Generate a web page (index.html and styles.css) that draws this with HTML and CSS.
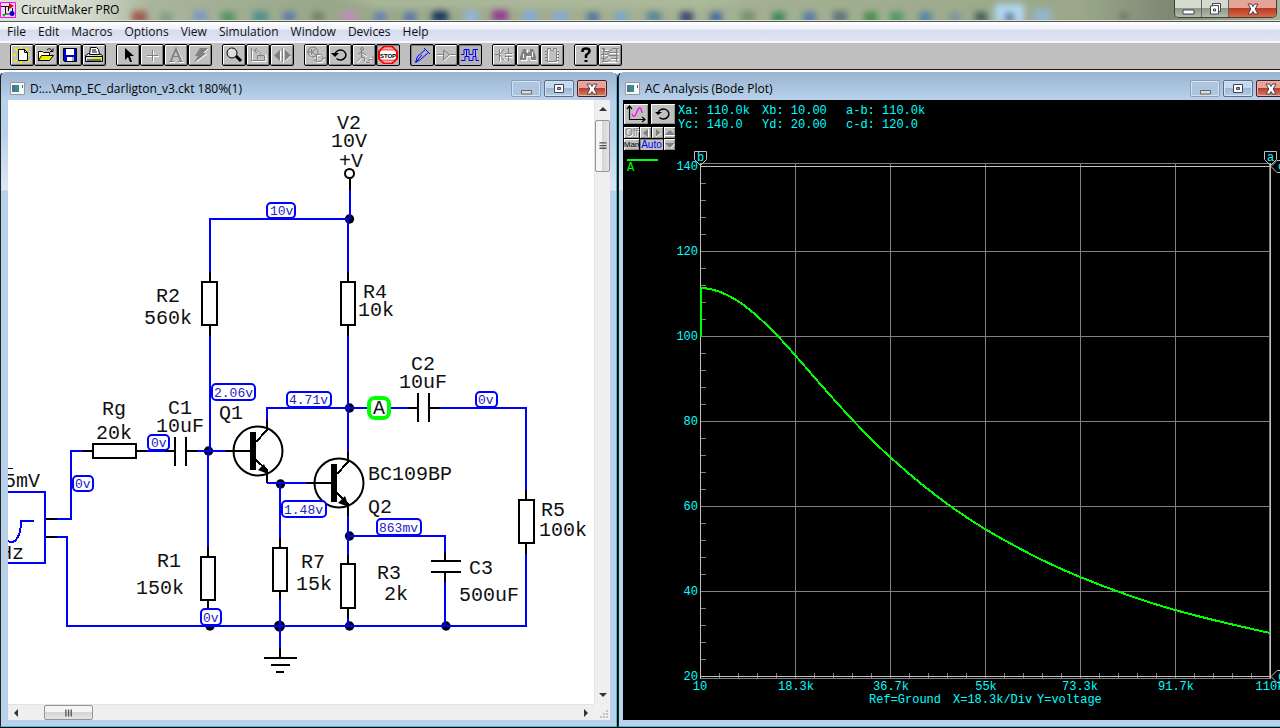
FILE: index.html
```html
<!DOCTYPE html>
<html lang="en">
<head>
<meta charset="utf-8">
<title>CircuitMaker PRO</title>
<link rel="stylesheet" href="styles.css">
</head>
<body>
<header class="titlebar">
  <svg class="glass" aria-hidden="true">
    <defs><filter id="soft" x="-50%" y="-50%" width="200%" height="200%"><feGaussianBlur stdDeviation="3"/></filter></defs>
    <g filter="url(#soft)">
      <path d="M330 -4H760L700 8H380Z" fill="#b2bfa0" opacity=".6"/>
      <rect x="132" y="11" width="15" height="12" fill="#a05a4c"/>
      <rect x="160" y="13" width="12" height="9" fill="#7d9f7c"/>
      <rect x="193" y="11" width="14" height="11" fill="#7c98bf"/>
      <rect x="221" y="12" width="14" height="11" fill="#539460"/>
      <rect x="253" y="11" width="15" height="12" fill="#4f928a"/>
      <rect x="283" y="12" width="12" height="10" fill="#5d78ab"/>
      <rect x="312" y="12" width="12" height="10" fill="#77806c"/>
      <rect x="342" y="11" width="15" height="12" fill="#bd8fb9"/>
      <rect x="374" y="12" width="12" height="11" fill="#6582b2"/>
      <rect x="404" y="12" width="12" height="11" fill="#5878ae"/>
      <rect x="432" y="10" width="16" height="13" fill="#1e3c64"/>
      <rect x="464" y="11" width="14" height="12" fill="#8fb6d8"/>
      <rect x="492" y="9" width="16" height="13" fill="#953f91"/>
      <rect x="523" y="11" width="14" height="12" fill="#82aad8"/>
      <rect x="554" y="12" width="13" height="11" fill="#81aade"/>
      <rect x="587" y="12" width="12" height="11" fill="#54749f"/>
      <rect x="615" y="12" width="12" height="11" fill="#7da6d0"/>
      <rect x="647" y="11" width="14" height="12" fill="#5b8797"/>
      <rect x="680" y="11" width="13" height="12" fill="#3c4e74"/>
      <rect x="710" y="12" width="12" height="11" fill="#476a9c"/>
      <rect x="741" y="11" width="14" height="12" fill="#78936f"/>
      <rect x="772" y="12" width="13" height="11" fill="#3b8a5c"/>
      <rect x="803" y="12" width="13" height="11" fill="#597ba6"/>
      <rect x="833" y="11" width="14" height="12" fill="#61767b"/>
      <rect x="864" y="12" width="13" height="11" fill="#458f4d"/>
      <rect x="890" y="12" width="13" height="11" fill="#4c9866"/>
      <rect x="919" y="12" width="13" height="11" fill="#5685a5"/>
      <rect x="949" y="12" width="12" height="11" fill="#799a9b"/>
      <rect x="975" y="12" width="12" height="11" fill="#42625f"/>
      <rect x="995" y="4" width="29" height="20" fill="#b2d7f2"/>
      <rect x="1005" y="13" width="9" height="9" fill="#47688b"/>
      <rect x="1033" y="9" width="18" height="14" fill="#93b6cf"/>
      <rect x="1120" y="13" width="8" height="7" fill="#69755f"/>
    </g>
  </svg>
  <svg class="app-icon" viewBox="0 0 16 16" aria-hidden="true"><path fill="#e8e0ee" stroke="#f0f" d="M.5.5h15v15H.5z"/><path d="M1 4.500h9M5.500 4v8h4M8.500 4v5M12.500 6v4" stroke="#111" fill="none"/><path d="M9 1l5 3-5 3z" fill="#e00"/><circle cx="12" cy="11.500" r="2.500" fill="#00c"/><path d="M2 12h4l-2 3z" fill="#0a0"/></svg>
  <h1 class="app-title">CircuitMaker PRO</h1>
  <div class="app-controls">
    <button class="cap" aria-label="Minimize"><svg viewBox="0 0 14 14"><path d="M2 8h11v4H2z" fill="#fff" stroke="#445"/></svg></button>
    <button class="cap cap-mid" aria-label="Restore"><svg viewBox="0 0 14 14"><path d="M4.500 1.500h8v8h-2v2.500h-8v-8h2z" fill="#fff" stroke="#445"/><path d="M5.500 7h2v2h-2zM4.500 3.500h6v6" fill="none" stroke="#445"/></svg></button>
    <button class="cap cap-close" aria-label="Close"><svg viewBox="0 0 14 14"><path d="M2 2h3.500L7 4.500 8.500 2H12L9.200 7 12 12H8.500L7 9.500 5.500 12H2l2.800-5z" fill="#fff" stroke="#534"/></svg></button>
  </div>
</header>

<nav class="menubar">
  <a href="#">File</a><a href="#">Edit</a><a href="#">Macros</a><a href="#">Options</a><a href="#">View</a><a href="#">Simulation</a><a href="#">Window</a><a href="#">Devices</a><a href="#">Help</a>
</nav>

<div class="toolbar" role="toolbar" aria-label="Tools">
  <div class="group">
    <button class="tool" aria-label="New"><svg viewBox="0 0 20 18"><path d="M3 2l3 3M16 2l-2 2M1 9h3M15 9h3M3 16l2-2M17 16l-2-2M9 0v3M9 15v3" stroke="#ee0" stroke-width="2"/><path d="M6.500 3.500h6l3 3v8h-9z" fill="#fff" stroke="#000"/><path d="M12.500 3.500v3h3" fill="none" stroke="#000"/></svg></button>
    <button class="tool" aria-label="Open"><svg viewBox="0 0 20 18"><path d="M2.500 14.500v-9h4l1 1h6v3" fill="#ffc" stroke="#000"/><path d="M2.500 14.500l3-5h12l-4 5z" fill="#ee0" stroke="#000"/><path d="M11 4q3-3 5 1M14 5.500h3v-3" fill="none" stroke="#000"/></svg></button>
    <button class="tool" aria-label="Save"><svg viewBox="0 0 20 18"><path d="M3.500 2.500h13v13h-12l-1-1z" fill="#00c" stroke="#000"/><path d="M6 3h8v6H6zM7 11h5v4H7z" fill="#fff"/><path d="M12 11h2v4h-2z" fill="#aaa"/></svg></button>
    <button class="tool" aria-label="Print"><svg viewBox="0 0 20 18"><path d="M1.500 9.500l3-2h11l3 2v6h-17z" fill="#ddd" stroke="#000"/><path d="M5.500 8.500l1-7h6l2 2 1 5z" fill="#fff" stroke="#000"/><path d="M8 4h4M8 6h5" stroke="#000"/><path d="M9 12.500h9" stroke="#ee0" stroke-width="2"/><path d="M2 10.500h16M3 14h14" stroke="#000"/></svg></button>
  </div>
  <div class="group">
    <button class="tool" aria-label="Arrow"><svg viewBox="0 0 20 18"><path d="M7 2v12l3-3 2 5h2l-2-6h4z" fill="#000"/></svg></button>
    <button class="tool" aria-label="Wire" disabled><svg viewBox="0 0 20 18"><path class="lit" d="M11.500 5v11M5 10.500h12"/><path class="dim" d="M10.500 4v11M5 9.500h11"/></svg></button>
    <button class="tool" aria-label="Text" disabled><svg viewBox="0 0 20 18"><path class="lit" d="M4 16.500h5M13 16.500h5M6 15l5-12 6 13"/><path class="dim" stroke-width="2" d="M5 15l5-12 5 12"/><path class="dim" d="M3 15.500h5M12 15.500h5M7 10.500h6"/></svg></button>
    <button class="tool" aria-label="Delete" disabled><svg viewBox="0 0 20 18"><path d="M10 2h8l-5 5h3L4 17l4-7H5z" fill="#808080"/><path class="lit" d="M18 3l-4 4M17 8L6 16"/></svg></button>
  </div>
  <div class="group">
    <button class="tool" aria-label="Zoom"><svg viewBox="0 0 20 18"><circle cx="8" cy="7" r="5" fill="#ddd" stroke="#000"/><path d="M5 5q1-2 3-2" stroke="#fff" fill="none"/><path d="M12 10l5 5" stroke="#000" stroke-width="3"/></svg></button>
    <button class="tool" aria-label="Rotate" disabled><svg viewBox="0 0 20 18"><path class="lit" d="M4 15.500h14v-6h-8M4.500 5v10M8 5.500q5 0 5 6"/><path class="dim" d="M3.500 2v12.500h13v-5h-7v4M7 4.500q6 0 6 7M9 2L6 4.500 9 7"/></svg></button>
    <button class="tool" aria-label="Mirror" disabled><svg viewBox="0 0 20 18"><path d="M8 4v11L2 9.500zM13 4v11l6-5.500z" fill="#808080"/><path class="lit" d="M11.500 2v15M8.500 5v10M13.500 15l5-5"/><path class="dim" d="M10.500 2v14"/></svg></button>
  </div>
  <div class="group">
    <button class="tool" aria-label="Digital analog" disabled><svg viewBox="0 0 20 18"><path class="lit" d="M11 9.500h5q4 4 0 7h-5zM8 12h3M5 5v7"/><circle class="dim" cx="7" cy="6" r="5"/><path class="dim" d="M1 6h4M5.500 3v6M6 6l4-3M6 6l4 3M10.500 8.500h4q5 3.500 0 7h-4zM8 14h3M17 12h3"/></svg></button>
    <button class="tool" aria-label="Reset"><svg viewBox="0 0 20 18"><path d="M5 8A5.500 5 0 1 1 6.500 12.500" fill="none" stroke="#000" stroke-width="1.500"/><path d="M1 7h8l-4 4z" fill="#000"/></svg></button>
    <button class="tool" aria-label="Step" disabled><svg viewBox="0 0 20 18"><path class="lit" d="M9 8l4 3M8 11l-4 6M11 13v4M14 15.500h2v-3h4"/><circle class="dim" cx="8" cy="3" r="1.500"/><path class="dim" d="M7.500 5v6l-4 4M7.500 11l3 1v4M4 8l3-2 5 3M12 16.500h3v-3h4v-3"/></svg></button>
    <button class="tool pressed" aria-label="Stop"><svg viewBox="0 0 20 18"><path d="M6 .5h8l5 5v7l-5 5H6l-5-5v-7z" fill="#fff" stroke="#f00" stroke-width="2"/><path d="M4 3.500h12M4 14.500h12" stroke="#f66" stroke-width="2"/><text class="stop" x="10" y="12" text-anchor="middle">STOP</text></svg></button>
  </div>
  <div class="group">
    <button class="tool pressed" aria-label="Probe"><svg viewBox="0 0 20 18"><path d="M3.500 16.500l2-6 8-7 3 3-8 7zM4 16l6-7M12 2l6 6" fill="none" stroke="#00f"/></svg></button>
    <button class="tool" aria-label="Gate" disabled><svg viewBox="0 0 20 18"><path class="lit" d="M1 9.500h6M8 15l6-5.500h6"/><path class="dim" d="M1 8.500h6M7.500 4v10l6-5.500zM14 8.500h6"/></svg></button>
    <button class="tool pressed" aria-label="Waveforms"><svg viewBox="0 0 20 18"><path d="M1 8.500h3v-5h5v5h4v-5h5M1 14.500h4v-4h4v4h4v-4h3v4h3" fill="none" stroke="#00f"/><path d="M6.500 4v6M15.500 4v6" stroke="#00f"/></svg></button>
  </div>
  <div class="group">
    <button class="tool" aria-label="Parts" disabled><svg viewBox="0 0 20 18"><path class="lit" d="M6.500 3v13M8 10l4 5M12 8.500h7M12 11.500h7"/><path class="dim" d="M1 8.500h4M5.500 3v12M6 8l4-5M6 9l4 5M11 7.500h7M11 10.500h7M14.500 2v5M14.500 11v4"/></svg></button>
    <button class="tool" aria-label="Search" disabled><svg viewBox="0 0 20 18"><path class="lit" d="M3 14.500h6v-4h4v4h6"/><path d="M5 3h3v3h4V3h3l3 8v3h-5v-4H8v4H2v-3z" fill="#808080"/><path class="lit" d="M5.500 8v4M9.500 4v3M14.500 6v5"/></svg></button>
    <button class="tool" aria-label="Macro chip" disabled><svg viewBox="0 0 20 18"><path class="lit" d="M6.500 4h9v12.500h-9z"/><path class="dim" d="M5.500 2.500h3v2h3v-2h3v13h-9zM3 5.500h2M3 8.500h2M3 11.500h2M3 14.500h2M15 5.500h2M15 8.500h2M15 11.500h2M15 14.500h2"/></svg></button>
  </div>
  <div class="group">
    <button class="tool" aria-label="Help"><svg viewBox="0 0 20 18"><path d="M6.500 6V5q0-2.500 3.500-2.500T13.500 5q0 2-2 3T10 11v1" fill="none" stroke="#000" stroke-width="2.500"/><path d="M8.500 14h3v2h-3z" fill="#000"/></svg></button>
    <button class="tool" aria-label="Board" disabled><svg viewBox="0 0 20 18"><path class="lit" d="M2 4.500h6l2 3h9M2 9.500h5l4 4h8M3 16.500h14"/><path class="dim" d="M1.500 2.500h3v3h5l3-3h6M1 8.500h5l4-2h8M1 12.500h4l4-3h9M2 15.500h6l3-3h7M3.500 3v13M16.500 3v13"/></svg></button>
  </div>
</div>

<main class="workspace">
  <section class="win win-circuit">
    <div class="win-title">
      <svg class="doc-icon" viewBox="0 0 15 13" aria-hidden="true"><path d="M.5.5h14v12H.5z" fill="#f8f8f8" stroke="#999"/><path d="M2 3h7v7H2z" fill="#3a8a8a"/><path d="M2 3h3v7H2z" fill="#4a6f9a"/><path d="M12 3h1v3h-1z" fill="#36a"/></svg>
      <h2>D:...\Amp_EC_darligton_v3.ckt 180%(1)</h2>
      <button class="mdi mdi-min" aria-label="Minimize"><svg viewBox="0 0 14 14"><path d="M2.500 8.500h10v3.500h-10z" fill="#ddd" stroke="#666"/></svg></button>
      <button class="mdi" aria-label="Maximize"><svg viewBox="0 0 14 14"><path d="M2.500 2.500h9v8h-9z" fill="#fff" stroke="#445"/><path d="M5.500 5.500h3v2h-3z" fill="#8ad" stroke="#445"/></svg></button>
      <button class="mdi mdi-close" aria-label="Close"><svg viewBox="0 0 14 14"><path d="M2 2h3.500L7 4.500 8.500 2H12L9.200 7 12 12H8.500L7 9.500 5.500 12H2l2.800-5z" fill="#fff" stroke="#445"/></svg></button>
    </div>
    <div class="circuit-body">
      <svg class="schematic" role="img" aria-label="Darlington amplifier schematic">
        <g transform="translate(-8 -100)">
          <g fill="#000">
            <circle cx="349.500" cy="219" r="4.700"/><circle cx="208.500" cy="451" r="4.700"/><circle cx="349.500" cy="408" r="4.700"/><circle cx="280.500" cy="484" r="4.700"/><circle cx="349.500" cy="536" r="4.700"/><circle cx="210" cy="626" r="4.700"/><circle cx="279.500" cy="626" r="5.500"/><circle cx="349.500" cy="626" r="4.700"/><circle cx="446" cy="626" r="4.700"/>
          </g>
          <g class="wire">
            <path d="M210 272V219H349M350 219V190M348 219V272M348 336V452M210 336V451"/>
            <path d="M57 519H71V451H83M147 451H165M197 451H226M208 451V547"/>
            <path d="M57 537H67V626H526V554M526 490V408H440M408 408H391M367 408H267V420"/>
            <path d="M267 483H307M280 484V538M280 599V648M348 516V555M348 618V626M348 536H445V552M445 582V626"/>
            <path d="M8 492H45V563H8M8 541C16 545 21 535 21 521H34"/>
          </g>
          <g class="part">
            <path d="M210 272V282M210 325V336M348 272V282M348 325V336M350 179V190M348 452V462"/>
            <path d="M83 451H93M136 451H147M165 451H174M175 437V466M186 437V466M187 451H197M46 519H57M46 537H57M226 451H250"/>
            <path d="M208 547V557M208 600V609M280 538V548M280 591V599M280 648V658M264 658H297M271 665H290M276 672H284"/>
            <path d="M348 555V564M348 608V618M445 552V561M431 561H461M431 572H461M445 572V582M526 490V500M526 543V554"/>
            <path d="M408 408H418M418 393V422M429 393V422M429 408H440"/>
            <path d="M202 282h15v43h-15zM341 282h14v43h-14zM93 444h43v14H93zM201 557h14v43h-14zM273 548h14v43h-14zM341 564h14v44h-14zM519 500h15v43h-15z"/>
            <path d="M267 420V430L256 442M256 460L267 470V483M307 483H332M348 462L337 474M337 493L348 504V516"/>
          </g>
          <g class="round"><circle cx="258" cy="451" r="24.500"/><circle cx="339" cy="483" r="24.500"/><circle cx="349.500" cy="173.500" r="4.500"/></g>
          <path d="M250 432h6v38h-6zM331 464h6v38h-6zM268 474l-10-4 6-6zM349 507l-11-4 7-7zM8 468h5v1h-5z"/>
          <g class="badge">
            <rect x="267" y="203" width="28" height="15" rx="4"/><rect x="212" y="384" width="43" height="16" rx="4"/><rect x="287" y="392" width="44" height="15" rx="4"/><rect x="476" y="392" width="21" height="15" rx="4"/><rect x="148" y="435" width="21" height="15" rx="4"/><rect x="73" y="476" width="20" height="15" rx="4"/><rect x="282" y="501" width="44" height="16" rx="4"/><rect x="377" y="519" width="44" height="16" rx="4"/><rect x="201" y="609" width="20" height="16" rx="4"/>
          </g>
          <g class="volt">
            <text x="270" y="215">10v</text><text x="214" y="397">2.06v</text><text x="289" y="404">4.71v</text><text x="478" y="404">0v</text><text x="151" y="447">0v</text><text x="75" y="488">0v</text><text x="284" y="514">1.48v</text><text x="379" y="532">863mv</text><text x="203" y="622">0v</text>
          </g>
          <rect x="369" y="398" width="20" height="20" rx="6" fill="#fff" stroke="#0f0" stroke-width="4"/>
          <g class="label">
            <text x="337" y="129">V2</text><text x="331" y="147">10V</text><text x="339" y="167">+V</text>
            <text x="156" y="302">R2</text><text x="144" y="324">560k</text>
            <text x="363" y="298">R4</text><text x="358" y="316">10k</text>
            <text x="411" y="370">C2</text><text x="399" y="388">10uF</text>
            <text x="102" y="415">Rg</text><text x="96" y="439">20k</text>
            <text x="168" y="414">C1</text><text x="156" y="432">10uF</text>
            <text x="219" y="419">Q1</text><text x="368" y="480">BC109BP</text><text x="368" y="513">Q2</text>
            <text x="4" y="487">5mV</text><text x="0" y="559">Hz</text>
            <text x="157" y="567">R1</text><text x="136" y="594">150k</text>
            <text x="301" y="568">R7</text><text x="296" y="590">15k</text>
            <text x="377" y="579">R3</text><text x="384" y="600">2k</text>
            <text x="469" y="574">C3</text><text x="459" y="601">500uF</text>
            <text x="541" y="516">R5</text><text x="539" y="536">100k</text>
            <text x="373" y="414">A</text>
          </g>
        </g>
      </svg>
      <div class="vscroll">
        <button class="arrow" aria-label="Scroll up"><svg viewBox="0 0 8 8"><path d="M4 2l4 4H0z" fill="#333"/></svg></button>
        <div class="thumb"><svg viewBox="0 0 8 9"><path d="M0 1h8M0 4h8M0 7h8" stroke="#555" stroke-width="1.500"/></svg></div>
        <button class="arrow arrow-end" aria-label="Scroll down"><svg viewBox="0 0 8 8"><path d="M4 6l4-4H0z" fill="#333"/></svg></button>
      </div>
      <div class="hscroll">
        <button class="arrow" aria-label="Scroll left"><svg viewBox="0 0 8 8"><path d="M2 4l4-4v8z" fill="#333"/></svg></button>
        <div class="thumb"><svg viewBox="0 0 9 8"><path d="M1 0v8M4 0v8M7 0v8" stroke="#555" stroke-width="1.500"/></svg></div>
        <button class="arrow arrow-end" aria-label="Scroll right"><svg viewBox="0 0 8 8"><path d="M6 4L2 0v8z" fill="#333"/></svg></button>
      </div>
      <svg class="grip" viewBox="0 0 16 16" aria-hidden="true"><path d="M12 6h2v2h-2zM9 9h2v2H9zM12 9h2v2h-2zM6 12h2v2H6zM9 12h2v2H9zM12 12h2v2h-2z" fill="#c4c4c4"/></svg>
    </div>
  </section>

  <section class="win win-plot">
    <div class="win-title">
      <svg class="doc-icon" viewBox="0 0 15 13" aria-hidden="true"><path d="M.5.5h14v12H.5z" fill="#f8f8f8" stroke="#999"/><path d="M2 3h7v7H2z" fill="#3a8a8a"/><path d="M2 3h3v7H2z" fill="#4a6f9a"/><path d="M12 3h1v3h-1z" fill="#36a"/></svg>
      <h2>AC Analysis (Bode Plot)</h2>
      <button class="mdi mdi-min" aria-label="Minimize"><svg viewBox="0 0 14 14"><path d="M2.500 8.500h10v3.500h-10z" fill="#ddd" stroke="#666"/></svg></button>
      <button class="mdi" aria-label="Maximize"><svg viewBox="0 0 14 14"><path d="M2.500 2.500h9v8h-9z" fill="#fff" stroke="#445"/><path d="M5.500 5.500h3v2h-3z" fill="#8ad" stroke="#445"/></svg></button>
      <button class="mdi mdi-close" aria-label="Close"><svg viewBox="0 0 14 14"><path d="M2 2h3.500L7 4.500 8.500 2H12L9.200 7 12 12H8.500L7 9.500 5.500 12H2l2.800-5z" fill="#fff" stroke="#445"/></svg></button>
    </div>
    <div class="plot-body">
      <div class="plot-head">
        <div class="plot-tools">
          <div class="row row-big">
            <button class="key" aria-label="Plot settings"><svg viewBox="0 0 22 18"><path d="M4.500 1v13.500H20M2 4l2.500-3L7 4M17 12l3 2.500-3 2.500" fill="none" stroke="#000" stroke-width="1.200"/><path d="M7 9q2 5 4 0t3-6q2-1 3 5" fill="none" stroke="#f0f" stroke-width="1.300"/></svg></button>
            <button class="key" aria-label="Reset plot"><svg viewBox="0 0 22 18"><path d="M6 8A5.500 5 0 1 1 7.500 12.500" fill="none" stroke="#000" stroke-width="1.400"/><path d="M3 7h7l-4 3z" fill="#000"/></svg></button>
          </div>
          <div class="row">
            <button class="key key-off">Off</button>
            <button class="key" aria-label="Previous"><svg viewBox="0 0 10 10"><path d="M7 1v8L2 5z" fill="#808080"/><path class="lit" d="M7.500 1v8"/></svg></button>
            <button class="key" aria-label="Next"><svg viewBox="0 0 10 10"><path d="M3 1v8l5-4z" fill="#808080"/><path class="lit" d="M3 9l5-4"/></svg></button>
            <button class="key" aria-label="Up"><svg viewBox="0 0 10 10"><path d="M5 2l5 5H0z" fill="#808080"/><path class="lit" d="M0 7.500h10"/></svg></button>
          </div>
          <div class="row row-mode">
            <button class="key key-man">Man</button>
            <button class="key key-auto">Auto</button>
            <button class="key" aria-label="Down"><svg viewBox="0 0 10 10"><path d="M5 8l5-5H0z" fill="#808080"/><path class="lit" d="M5 8.500l5-5"/></svg></button>
          </div>
        </div>
        <div class="readout">
          <span>Xa: 110.0k</span><span>Xb: 10.00</span><span>a-b: 110.0k</span>
          <span>Yc: 140.0</span><span>Yd: 20.00</span><span>c-d: 120.0</span>
        </div>
      </div>
      <svg class="plot" role="img" aria-label="Bode plot of trace A">
        <g transform="translate(-623 -150)">
          <path class="grid" d="M700 163.500H1270M700 251.500H1270M700 336.500H1270M700 421.500H1270M700 506.500H1270M700 591.500H1270M700 678.500H1270M795.500 163V678M890.500 163V678M985.500 163V678M1080.500 163V678M1175.500 163V678M1269.500 163V678"/>
          <path class="grid" stroke-dasharray="1 16" stroke-width="5" d="M703.500 166V677"/>
          <path class="grid" stroke-dasharray="1 18" stroke-width="5" d="M700 675.500H1271"/>
          <path class="axis" d="M700.500 163V679M700 166.500H1271M700 676.500H1271M1270.500 163V679"/>
          <path class="axis" d="M694.500 151.500h12v8l-6 6-6-6zM1264.500 151.500h12v8l-6 6-6-6z"/>
          <path class="axis" d="M1271 166.500l6-6h6M1271 166.500l6 6h6M1271 676.500l6-6h6M1271 676.500l6 6h6"/>
          <path class="trace" d="M701 337V288C713 288 725 293 738 301C757 314 776 333 795 355C827 392 858 428 890 457C922 486 953 510 985 529C1017 548 1048 564 1080 577C1112 590 1143 601 1175 610C1207 619 1238 626 1270 633"/>
          <path class="trace" d="M627 160H658"/>
          <text class="trace-name" x="627" y="171">A</text>
          <g class="tick">
            <text x="697" y="161">b</text><text x="1267" y="161">a</text><text x="1278" y="170">c</text><text x="1278" y="680">d</text>
            <g text-anchor="end"><text x="698" y="170">140</text><text x="698" y="255">120</text><text x="698" y="340">100</text><text x="698" y="425">80</text><text x="698" y="510">60</text><text x="698" y="595">40</text><text x="698" y="680">20</text></g>
            <g text-anchor="middle"><text x="700" y="690">10</text><text x="796" y="690">18.3k</text><text x="891" y="690">36.7k</text><text x="986" y="690">55k</text><text x="1080" y="690">73.3k</text><text x="1176" y="690">91.7k</text><text x="1270" y="690">110k</text></g>
            <text x="869" y="703">Ref=Ground</text><text x="953" y="703">X=18.3k/Div</text><text x="1037" y="703">Y=voltage</text>
          </g>
        </g>
      </svg>
    </div>
  </section>
</main>
</body>
</html>
```
FILE: styles.css
```css
* { box-sizing: border-box; }

html, body { height: 100%; }

body {
  margin: 0;
  display: flex;
  flex-direction: column;
  overflow: hidden;
  background: #000;
  color: #000;
  font: 12px/16px "Open Sans", "Noto Sans", sans-serif;
}

button {
  margin: 0;
  padding: 0;
  font: inherit;
  color: inherit;
  display: flex;
  align-items: center;
  justify-content: center;
}

h1, h2 { margin: 0; font-size: 12px; font-weight: 400; white-space: nowrap; }

/* application title */
.titlebar {
  position: relative;
  flex: none;
  display: flex;
  align-items: center;
  height: 21px;
  background: linear-gradient(90deg, #dfe3da 0, #d3d9cb 90px, #a9b59d 150px, #98a788 320px, #a5b193 700px, #9aa889 1080px, #7d8875 1170px, #a9b29f 1280px);
  border-bottom: 1px solid #dde2d8;
  overflow: hidden;
}
.glass { position: absolute; inset: 0; width: 100%; height: 100%; }
.app-icon { position: relative; width: 16px; height: 16px; }
.app-title { position: relative; flex: 1; padding-left: 5px; }
.app-controls {
  position: relative;
  align-self: flex-start;
  display: flex;
  margin-right: 3px;
  border: 1px solid #3d433b;
  border-top: 0;
  border-radius: 0 0 5px 5px;
  overflow: hidden;
}
.cap {
  width: 27px;
  height: 17px;
  border: 0;
  border-right: 1px solid #5d6659;
  background: linear-gradient(#d5dacf 0 45%, #8d9887 50%, #b3bdab);
}
.cap svg, .mdi svg { width: 14px; height: 14px; }
.cap-close { width: 47px; border: 0; background: linear-gradient(#e3a597 0 45%, #bd3a20 50%, #d4694a); }

/* menu */
.menubar {
  flex: none;
  display: flex;
  align-items: center;
  gap: 12px;
  height: 22px;
  padding: 0 7px;
  border-top: 1px solid #555;
  border-bottom: 2px solid #f4f6fb;
  background: linear-gradient(#fff, #eef0f8 38%, #d6dcee 42%, #dfe4f6);
}
.menubar a { color: #111; text-decoration: none; }

/* toolbar */
.toolbar {
  flex: none;
  display: flex;
  gap: 10px;
  height: 27px;
  padding: 1px 10px;
  background: #c0c0c0;
  border-bottom: 1px solid #1c1c1c;
}
.group { display: flex; }
.tool {
  width: 24px;
  height: 22px;
  border: 1px solid #000;
  border-radius: 2px;
  background: #c0c0c0;
  box-shadow: inset 1px 1px #fff, inset -1px -1px #808080;
}
.tool svg { width: 20px; height: 18px; }
.pressed { box-shadow: inset 1px 1px #808080; background: #b4b4b4; }
.dim { fill: none; stroke: #808080; }
.lit { fill: none; stroke: #fff; stroke-width: 1; }
.stop { font: 700 6px "Liberation Sans", sans-serif; }

/* child windows */
.workspace {
  flex: 1;
  min-height: 0;
  display: flex;
  gap: 1px;
  padding: 1px 0 1px;
  background: linear-gradient(#fff 0 3px, #000 8px);
}
.win {
  display: flex;
  flex-direction: column;
  min-width: 0;
  padding: 0 6px 6px 7px;
  border: 1px solid #35c0dc;
  border-top-color: #fff;
  border-left-color: #222;
  border-radius: 6px 6px 0 0;
  background: linear-gradient(#99b4d1, #b9d1ea 28px 60px, #dce7f4 118px, #b9d1ea 119px);
}
.win-circuit { flex: 0 0 617px; }
.win-plot { flex: 1; margin-right: -16px; padding-left: 4px; }
.win-title {
  flex: none;
  display: flex;
  align-items: center;
  gap: 3px;
  height: 28px;
  padding: 5px 3px 0 2px;
}
.win-title h2 { flex: 1; padding-left: 2px; }
.doc-icon { width: 15px; height: 13px; }
.mdi {
  width: 30px;
  height: 17px;
  border: 1px solid #5b6f8c;
  border-radius: 2px;
  background: linear-gradient(#c5d9ee 0 45%, #9cb6d3 50%, #b6cfe8);
  box-shadow: inset 0 0 0 1px #d5e4f3;
}
.mdi-min { border-color: #8b9fba; background: #adc5df; }
.mdi-close {
  border-color: #4c1a22;
  background: linear-gradient(#e5a59b 0 45%, #bb3f2a 50%, #d4806c);
  box-shadow: inset 0 0 0 1px #e8b1a6;
}

/* circuit */
.circuit-body {
  flex: 1;
  min-height: 0;
  display: grid;
  grid-template: minmax(0, 1fr) 16px / minmax(0, 1fr) 16px;
  background: #f0f0f0;
}
.schematic { width: 100%; height: 100%; background: #fff; }
.wire, .part, .badge, .round { fill: none; stroke-width: 2; }
.wire, .part { shape-rendering: crispEdges; }
.wire { stroke: #00f; }
.part, .round { stroke: #000; }
.badge { fill: #fff; stroke: #00f; }
.volt { fill: #22c; font: 13px "Liberation Mono", monospace; }
.label { fill: #111; font: 20px "Liberation Mono", monospace; }

.vscroll, .hscroll { display: flex; background: #efefef; }
.vscroll { flex-direction: column; border-left: 1px solid #e3e3e3; }
.hscroll { border-top: 1px solid #e3e3e3; }
.arrow { width: 16px; height: 18px; border: 0; background: none; }
.hscroll .arrow { height: 15px; }
.arrow svg { width: 8px; height: 8px; }
.arrow-end { margin-top: auto; }
.hscroll .arrow-end { margin: 0 0 0 auto; }
.thumb {
  display: flex;
  align-items: center;
  justify-content: center;
  border: 1px solid #959595;
  border-radius: 2px;
}
.vscroll .thumb { height: 52px; margin-top: 2px; background: linear-gradient(90deg, #f5f5f5 45%, #d5d5d8 50%, #e5e5e5); }
.hscroll .thumb { width: 49px; margin-left: 20px; background: linear-gradient(#f5f5f5 45%, #d5d5d8 50%, #e5e5e5); }
.thumb svg { width: 8px; height: 8px; }
.grip { width: 16px; height: 16px; }

/* Bode plot */
.plot-body {
  flex: 1;
  min-height: 0;
  display: flex;
  flex-direction: column;
  background: #000;
}
.plot-head { flex: none; display: flex; gap: 3px; height: 50px; padding: 4px 1px 0; }
.plot-tools { display: flex; flex-direction: column; gap: 1px; width: 51px; }
.row { display: grid; grid-template-columns: 15px 11px 11px 11px; gap: 1px; height: 11px; }
.row-big { grid-template-columns: 24px 24px; gap: 3px; height: 20px; margin-bottom: 2px; }
.row-mode { grid-template-columns: 15px 23px 11px; }
.key {
  min-width: 0;
  border: 0;
  background: #c0c0c0;
  box-shadow: inset 1px 1px #fff, inset -1px -1px #909090;
  font: 10px/11px "Liberation Sans", sans-serif;
}
.key svg { width: 10px; height: 10px; }
.row-big svg { width: 22px; height: 18px; }
.key-off { color: #808080; text-shadow: 1px 1px #fff; }
.key-man { font-size: 8px; }
.key-auto { color: #00f; box-shadow: inset 1px 1px #808080; }
.readout {
  display: grid;
  grid-template-columns: repeat(3, 84px);
  grid-auto-rows: 14px;
  align-content: start;
  font: 12px/14px "Liberation Mono", monospace;
  color: #0ff;
  white-space: nowrap;
}
.plot { flex: 1; min-height: 0; width: 100%; }
.grid, .axis { fill: none; }
.grid { stroke: #808080; }
.axis { stroke: #c0c0c0; }
.trace { fill: none; stroke: #0f0; stroke-width: 2; shape-rendering: crispEdges; }
.tick, .trace-name { font: 12px "Liberation Mono", monospace; fill: #0ff; }
.trace-name { fill: #0f0; }
```
